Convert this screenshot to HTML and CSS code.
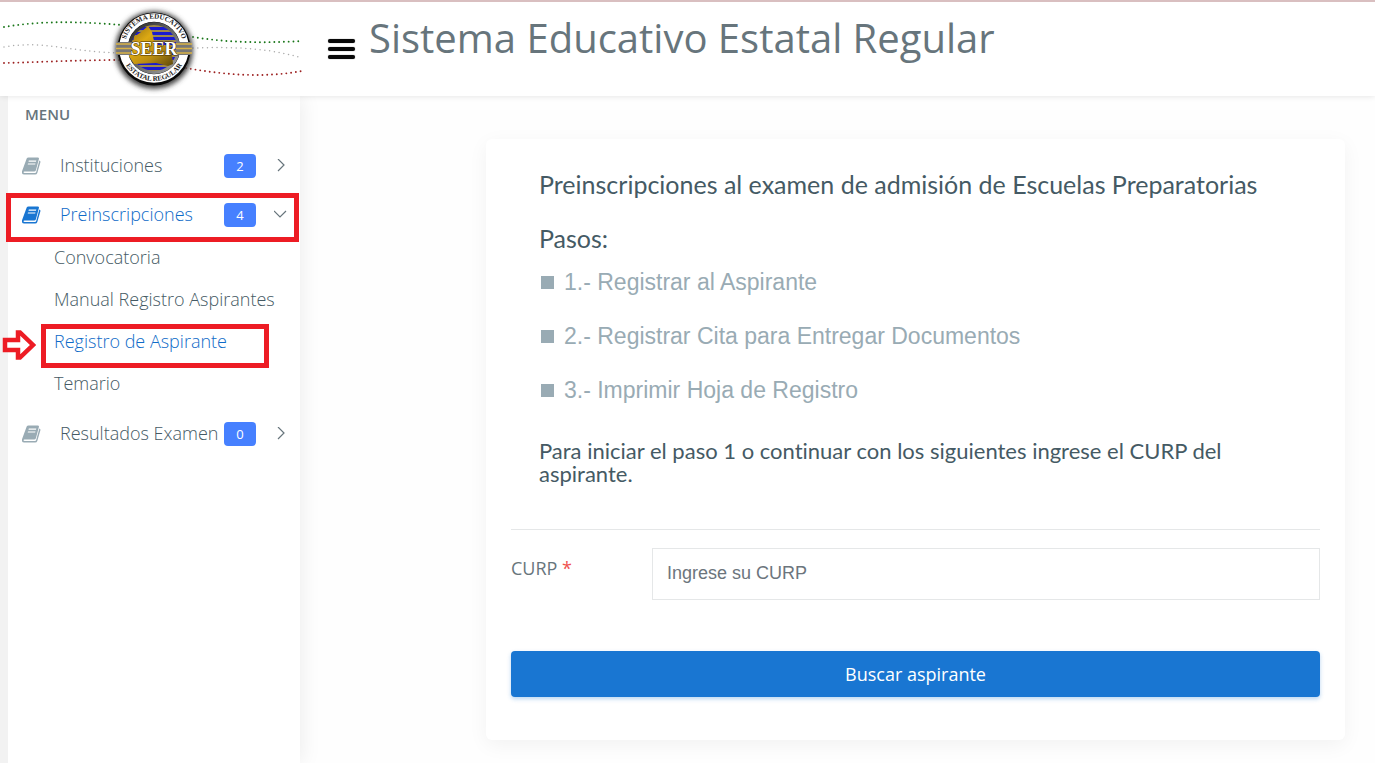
FILE: index.html
```
<!DOCTYPE html>
<html lang="es">
<head>
<meta charset="utf-8">
<meta name="viewport" content="width=device-width, initial-scale=1">
<title>Sistema Educativo Estatal Regular</title>
<link rel="stylesheet" href="styles.css">
</head>
<body>
<svg class="sprite" aria-hidden="true">
  <symbol id="book" viewBox="0 0 20 20">
    <path fill="currentColor" fill-rule="evenodd" d="M4.700 2.600Q5.100 1.400 6.500 1.400H15.700q1.600 0 1.200 1.500L13.900 14.200q-.4 1.300-1.800 1.300H2.400Q1.500 15.500 1.500 16.200q.1.700 1.100.7h10.300q1 0 1.300-1L17.300 4.600q1.400.4 1.100 1.700L15.300 17q-.5 1.600-2.200 1.600H2.200Q-.6 18.300-.1 15.500ZM6.800 4.500l-.3 1.200h7.500l.3-1.200ZM6 7.400l-.3 1.100h7.500l.3-1.100Z"/>
  </symbol>
  <symbol id="chevron" viewBox="0 0 14 14">
    <path d="M4 0l6 6-6 6" fill="none" stroke="currentColor" stroke-width="1.200"/>
  </symbol>
  <symbol id="chevron-down" viewBox="0 0 14 14">
    <path d="M0 3l6 6 6-6" fill="none" stroke="currentColor" stroke-width="1.200"/>
  </symbol>
</svg>

<header class="topbar">
  <svg class="brand" viewBox="0 0 302 94" role="img" aria-label="SEER Sistema Educativo Estatal Regular">
    <defs>
      <filter id="soft" x="-30%" y="-30%" width="160%" height="160%"><feGaussianBlur stdDeviation="2.500"/></filter>
      <linearGradient id="gold" x1="0" y1="0" x2="1" y2="1">
        <stop offset="0" stop-color="#8c6a10"/><stop offset=".35" stop-color="#dca914"/><stop offset=".65" stop-color="#b98c10"/><stop offset="1" stop-color="#5d480d"/>
      </linearGradient>
      <linearGradient id="shade" x1="0" y1="0" x2="1" y2="1"><stop offset="0" stop-color="#222"/><stop offset="1" stop-color="#aaa"/></linearGradient>
      <pattern id="stripes" width="8" height="5" patternUnits="userSpaceOnUse"><rect width="8" height="5" fill="#a0894a"/><rect width="8" height="3" fill="#1a1ad0"/></pattern>
      <path id="arc-top" d="M124.500 46a29.500 29.500 0 0 1 59 0"/>
      <path id="arc-bottom" d="M121 46a33 33 0 0 0 66 0"/>
    </defs>
    <g fill="none" stroke-width="1.900" stroke-linecap="round" stroke-dasharray="0 4.800">
      <path stroke="#197619" d="M4 25C44 18 86 20 122 23M193 35C230 41 265 41 302 39"/>
      <path stroke="#aaa" stroke-width="1.500" d="M4 45C43 38 70 50 120 51M193 46C230 45 265 45 302 56"/>
      <path stroke="#9d2222" d="M4 61C42 60 80 58 120 58M186 66C225 73 265 76 302 69"/>
    </g>
    <circle cx="154" cy="48" r="39" fill="#444" filter="url(#soft)"/>
    <circle cx="154" cy="47" r="36.500" fill="#080808"/>
    <circle cx="154" cy="46" r="30.500" fill="none" stroke="#fff" stroke-width="8.500"/>
    <circle cx="154" cy="46" r="26" fill="url(#shade)"/>
    <circle cx="154" cy="46" r="23" fill="url(#stripes)"/>
    <path d="M134 35l7-5 7-6 4 6 2 9 0 4 17 1 2 18-5 2-12-3-22 1-5-8 3-7z" fill="url(#gold)"/>
    <path d="M117 40h15v13h-15zM176 40h15v13h-15z" fill="#777"/>
    <path d="M116 42h17m-17 4.500h17m-17 4.500h17M175 42h17m-17 4.500h17m-17 4.500h17" stroke="#d9b246" stroke-width="1.500"/>
    <text class="seal-ring"><textPath href="#arc-top" startOffset="50%" text-anchor="middle">SISTEMA EDUCATIVO</textPath></text>
    <text class="seal-ring"><textPath href="#arc-bottom" startOffset="50%" text-anchor="middle">ESTATAL REGULAR</textPath></text>
    <text class="seal-name" x="154" y="53" text-anchor="middle">SEER</text>
  </svg>
  <button class="menu-toggle" type="button" aria-label="Mostrar u ocultar el menú"><span></span><span></span><span></span></button>
  <h1 class="site-title">Sistema Educativo Estatal Regular</h1>
</header>

<div class="layout">
  <nav class="sidebar" aria-label="Menú principal">
    <h2 class="menu-title">MENU</h2>
    <ul class="menu">
      <li><a class="menu-link" href="#instituciones"><svg class="book"><use href="#book"/></svg><span class="menu-text">Instituciones</span><span class="badge">2</span><svg class="chevron"><use href="#chevron"/></svg></a></li>
      <li>
        <a class="menu-link active marked" href="#preinscripciones"><svg class="book"><use href="#book"/></svg><span class="menu-text">Preinscripciones</span><span class="badge">4</span><svg class="chevron"><use href="#chevron-down"/></svg></a>
        <ul class="submenu">
          <li><a class="sub-link" href="#convocatoria">Convocatoria</a></li>
          <li><a class="sub-link" href="#manual">Manual Registro Aspirantes</a></li>
          <li><a class="sub-link active marked" href="#registro">Registro de Aspirante<svg class="pointer" viewBox="0 0 34 34" aria-hidden="true"><path d="M3 12H16V4.500H18L31 17 18 29.500H16V22H3Z" fill="#fff" stroke="#ed1c24" stroke-width="4.500"/></svg></a></li>
          <li><a class="sub-link" href="#temario">Temario</a></li>
        </ul>
      </li>
      <li><a class="menu-link" href="#resultados"><svg class="book"><use href="#book"/></svg><span class="menu-text">Resultados Examen</span><span class="badge">0</span><svg class="chevron"><use href="#chevron"/></svg></a></li>
    </ul>
  </nav>

  <main class="content">
    <form class="card">
      <section class="intro">
        <h2 class="heading">Preinscripciones al examen de admisión de Escuelas Preparatorias</h2>
        <h3 class="heading">Pasos:</h3>
        <ul class="steps">
          <li>1.- Registrar al Aspirante</li>
          <li>2.- Registrar Cita para Entregar Documentos</li>
          <li>3.- Imprimir Hoja de Registro</li>
        </ul>
        <p class="hint">Para iniciar el paso 1 o continuar con los siguientes ingrese el CURP del aspirante.</p>
      </section>
      <div class="field">
        <label for="curp">CURP <span class="required">*</span></label>
        <input id="curp" name="curp" type="text" placeholder="Ingrese su CURP">
      </div>
      <button class="submit" type="submit">Buscar aspirante</button>
    </form>
  </main>
</div>
</body>
</html>
```

FILE: styles.css
```
* { box-sizing: border-box; }
body {
  margin: 0;
  min-height: 100vh;
  display: flex;
  flex-direction: column;
  background: #fefefe;
  color: #67757c;
  font-family: "Open Sans", sans-serif;
  font-size: 18px;
}
h1, h2, h3, p, ul { margin: 0; padding: 0; }
h1, h2, h3 { font-weight: 400; }
ul { list-style: none; }
a { color: inherit; text-decoration: none; }
.sprite { display: none; }

.topbar {
  position: relative;
  z-index: 1;
  display: flex;
  align-items: flex-start;
  height: 96px;
  background: #fff;
  border-top: 2px solid #d9bfc0;
  box-shadow: 0 0 6px rgba(0, 0, 0, .12);
}
.brand { width: 302px; height: 94px; flex: none; }
.seal-ring { font: 700 7px "Liberation Serif", serif; fill: #222; }
.seal-name { font: 700 18px "Liberation Serif", serif; fill: #fff; stroke: #443000; stroke-width: 1px; paint-order: stroke; }
.menu-toggle {
  display: flex;
  flex-direction: column;
  gap: 4px;
  width: 27px;
  margin: 37px 14px 0 26px;
  padding: 0;
  border: 0;
  background: none;
}
.menu-toggle span { width: 27px; height: 4px; border-radius: 2px; background: #080808; box-shadow: 0 0 1px #555; }
.site-title { font-size: 40px; line-height: 48px; padding-top: 12px; }

.layout { flex: 1; display: flex; }
.sidebar {
  width: 300px;
  flex: none;
  background: #fff;
  border-left: 8px solid #f2f2f2;
  box-shadow: 1px 0 20px rgba(0, 0, 0, .08);
}
.menu-title { padding: 7px 17px 19px; font-size: 15px; line-height: 22px; font-weight: 600; }
.menu { display: flex; flex-direction: column; gap: 6px; font-weight: 300; color: #455a64; }
.menu-link { position: relative; display: flex; align-items: center; height: 43px; padding: 0 12px 0 14px; }
.book { width: 20px; height: 20px; margin-right: 18px; color: #99abb4; }
.menu-text { flex: 1; padding-bottom: 2px; white-space: nowrap; }
.badge {
  width: 32px;
  margin-right: 18px;
  border-radius: 4px;
  background: #4680ff;
  color: #fff;
  font-size: 13px;
  font-weight: 400;
  line-height: 24px;
  text-align: center;
}
.chevron { width: 14px; height: 14px; overflow: visible; color: #67757c; }
.active { color: #0f6bc8; }
.active .book { color: #1976d2; }
.marked::after { content: ""; position: absolute; border: 5px solid #ed1c24; }
.menu-link.marked::after { inset: 0 1px -6px -2px; }
.submenu { padding-bottom: 2px; }
.sub-link { position: relative; display: flex; align-items: center; height: 42px; padding-left: 46px; }
.sub-link.marked::after { inset: 4px 31px -6px 33px; }
.pointer { position: absolute; left: -6px; top: 8px; width: 34px; height: 34px; }

.content { flex: 1; padding: 43px 30px 23px 186px; }
.card {
  padding: 30px 25px 43px;
  border-radius: 6px;
  background: #fff;
  box-shadow: 0 5px 20px rgba(0, 0, 0, .05);
}
.intro { padding: 0 28px 44px; border-bottom: 1px solid #e5e7e8; }
.heading { margin-bottom: 24px; color: #455a64; font: 400 25px/30px Lato, sans-serif; }
h3.heading { margin-bottom: 0; }
.steps { padding-top: 14px; color: #99abb4; font: 23px/30px "Liberation Sans", Arial, sans-serif; }
.steps li { display: flex; align-items: center; margin-bottom: 24px; }
.steps li::before { content: ""; width: 13px; height: 13px; margin: 0 10px 0 2px; background: #99abb4; }
.hint { padding-top: 10px; color: #455a64; font: 22px/23px Lato, sans-serif; font-variant-ligatures: none; }
.field { display: grid; grid-template-columns: 141px 1fr; margin-top: 18px; }
.field label { padding-top: 8px; line-height: 24px; }
.required { color: #ef5350; }
.field input {
  height: 52px;
  padding: 0 14px 2px;
  border: 1px solid #e5e7e8;
  background: #fff;
  color: #67757c;
  font: 18px "Liberation Sans", Arial, sans-serif;
}
.field input::placeholder { color: #6c757d; opacity: 1; }
.submit {
  width: 100%;
  height: 46px;
  margin-top: 51px;
  border: 0;
  border-radius: 4px;
  background: #1976d2;
  color: #fff;
  font: 18px "Open Sans", sans-serif;
  box-shadow: 0 2px 4px rgba(25, 118, 210, .3);
}
```
